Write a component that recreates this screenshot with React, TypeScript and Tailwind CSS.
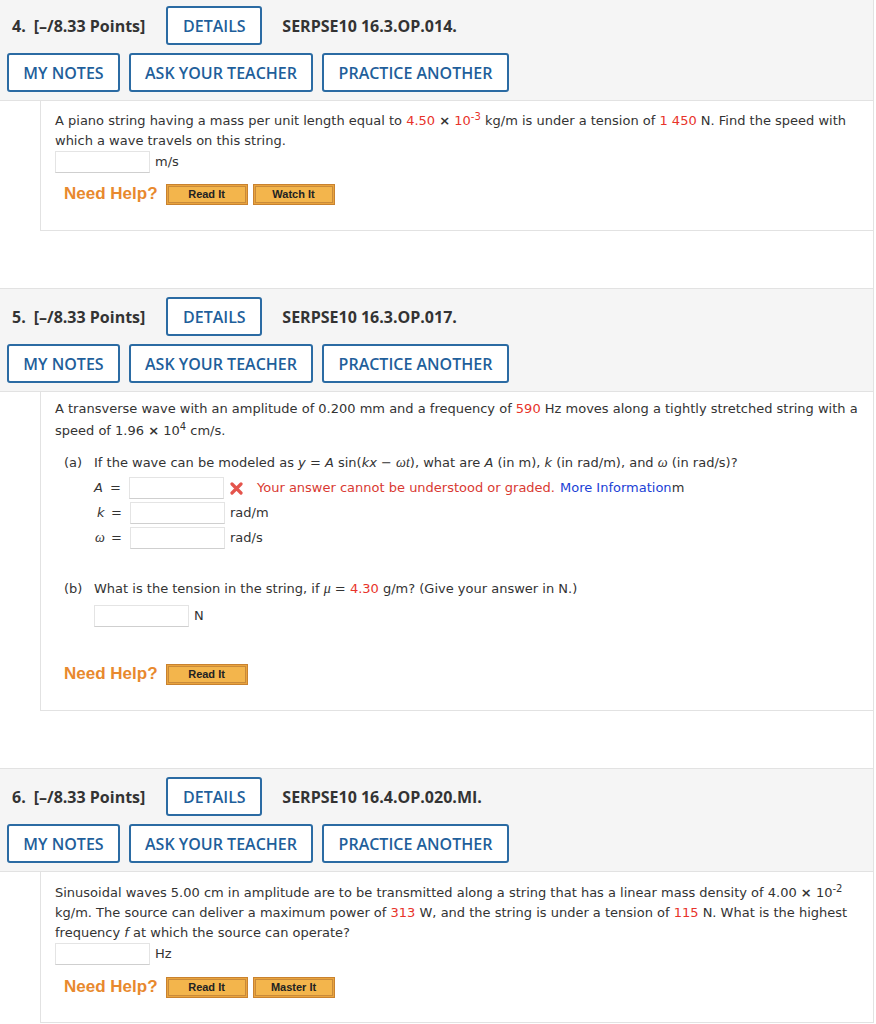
import React from 'react';

const body = "font-['DejaVu_Sans',Verdana,sans-serif] text-[13px] leading-[20px] text-[#333]";
const red = 'text-[#e8332a]';
const navBtn =
  'h-[39px] border-2 border-[#2b6ba3] rounded-[3px] text-[16px] font-semibold text-[#1f5f9b] bg-white';

const Header: React.FC<{ num: number; code: string; top?: boolean }> = ({ num, code, top }) => {
  return (
    <div
      className={`bg-[#f5f5f5] border-b border-[#e2e2e2] px-[7px] pb-[8px] font-['Open_Sans',sans-serif] ${
        top ? 'pt-[9px] -mt-[3px]' : 'pt-[8px] border-t'
      }`}
    >
      <div className="flex items-center h-[39px]">
        <span className="ml-[5px] text-[16px] font-bold text-[#333]">{num}.</span>
        <span className="ml-[8px] text-[16px] font-bold text-[#333]">[–/8.33 Points]</span>
        <button className={`${navBtn} ml-[21px] w-[96px]`}>DETAILS</button>
        <span className="ml-[20px] text-[16px] font-bold text-[#333]">{code}</span>
      </div>
      <div className="flex gap-[9px] mt-[8px]">
        <button className={`${navBtn} w-[113px]`}>MY NOTES</button>
        <button className={`${navBtn} w-[184px]`}>ASK YOUR TEACHER</button>
        <button className={`${navBtn} w-[187px]`}>PRACTICE ANOTHER</button>
      </div>
    </div>
  );
};

const Input: React.FC<{ className?: string }> = ({ className }) => (
  <div className={`h-[22px] w-[95px] border border-[#e4e4e4] border-b-[#cfcfcf] bg-white ${className ?? ''}`} />
);

const HelpBtn: React.FC<{ label: string }> = ({ label }) => (
  <div className="h-[21px] w-[82px] border border-[#c9822f] bg-[#f3b54c] shadow-[inset_0_0_0_1px_#e9a43e,inset_0_0_0_2px_#c98a3a] flex items-center justify-center font-['Liberation_Sans',Arial,sans-serif] text-[11px] font-bold text-[#222]">
    {label}
  </div>
);

const NeedHelp: React.FC<{ buttons: string[]; className?: string }> = ({ buttons, className }) => (
  <div className={`flex items-center h-[24px] ml-[9px] ${className ?? ''}`}>
    <span className="font-['Liberation_Sans',Arial,sans-serif] text-[17px] font-bold text-[#e8892e] mr-[8px]">
      Need Help?
    </span>
    <div className="flex gap-[5px]">
      {buttons.map((b) => (
        <HelpBtn key={b} label={b} />
      ))}
    </div>
  </div>
);

const Panel: React.FC<{ children: React.ReactNode; className?: string }> = ({ children, className }) => (
  <div className={`ml-[40px] border-l border-b border-[#e2e2e2] pl-[14px] pr-[10px] ${body} ${className ?? ''}`}>
    {children}
  </div>
);

const Sup: React.FC<{ children: React.ReactNode }> = ({ children }) => (
  <span className="text-[10px] leading-none align-super">{children}</span>
);

const Times = () => <span className="font-bold text-[#333]">×</span>;

const RedX = () => (
  <svg width="13" height="13" viewBox="0 0 13 13" className="mr-[14px]">
    <path d="M2 2 L11 11 M11 2 L2 11" stroke="#e4544c" strokeWidth="3.2" strokeLinecap="round" />
  </svg>
);

const Ser: React.FC<{ children: React.ReactNode }> = ({ children }) => (
  <span className="font-['Liberation_Serif',serif] italic text-[14px]">{children}</span>
);

export default function App() {
  return (
    <div className="w-[874px] border-r border-[#e2e2e2] bg-white">
      {/* Question 4 */}
      <Header num={4} code="SERPSE10 16.3.OP.014." top />
      <Panel className="pt-[10px] pb-[24px]">
        <p>
          A piano string having a mass per unit length equal to <span className={red}>4.50</span> <Times />{' '}
          <span className={red}>
            10<Sup>-3</Sup>
          </span>{' '}
          kg/m is under a tension of <span className={red}>1 450</span> N. Find the speed with which a wave travels on
          this string.
        </p>
        <div className="flex items-center">
          <Input />
          <span className="ml-[5px]">m/s</span>
        </div>
        <NeedHelp buttons={['Read It', 'Watch It']} className="mt-[9px]" />
      </Panel>

      <div className="h-[57px]" />

      {/* Question 5 */}
      <Header num={5} code="SERPSE10 16.3.OP.017." />
      <Panel className="pt-[6px] pb-[24px]">
        <p className="leading-[22px]">
          A transverse wave with an amplitude of 0.200 mm and a frequency of <span className={red}>590</span> Hz moves
          along a tightly stretched string with a speed of 1.96 <Times /> 10<Sup>4</Sup> cm/s.
        </p>
        <div className="mt-[11px] ml-[9px] flex">
          <span className="w-[30px]">(a)</span>
          <div className="flex-1">
            <p>
              If the wave can be modeled as <i>y</i> = <i>A</i> sin(<i>kx</i> − <Ser>ωt</Ser>), what are <i>A</i> (in
              m), <i>k</i> (in rad/m), and <Ser>ω</Ser> (in rad/s)?
            </p>
            <div className="mt-[4px] flex flex-col gap-[3px]">
              <div className="flex items-center h-[22px]">
                <span className="w-[35px] flex justify-between pr-[8px]">
                  <i>A</i>
                  <span>=</span>
                </span>
                <Input />
                <span className="ml-[6px] flex items-center">
                  <RedX />
                  <span className="text-[#d93a32]">Your answer cannot be understood or graded.</span>
                  <span className="ml-[5px] text-[#1a3fd6]">More Information</span>
                  <span>m</span>
                </span>
              </div>
              <div className="flex items-center h-[22px]">
                <span className="w-[36px] flex justify-between pl-[3px] pr-[8px]">
                  <i>k</i>
                  <span>=</span>
                </span>
                <Input />
                <span className="ml-[5px]">rad/m</span>
              </div>
              <div className="flex items-center h-[22px]">
                <span className="w-[36px] flex justify-between pl-[1px] pr-[8px]">
                  <Ser>ω</Ser>
                  <span>=</span>
                </span>
                <Input />
                <span className="ml-[5px]">rad/s</span>
              </div>
            </div>
          </div>
        </div>
        <div className="mt-[30px] ml-[9px] flex">
          <span className="w-[30px]">(b)</span>
          <div className="flex-1">
            <p>
              What is the tension in the string, if <Ser>μ</Ser> = <span className={red}>4.30</span> g/m? (Give your
              answer in N.)
            </p>
            <div className="mt-[6px] flex items-center">
              <Input />
              <span className="ml-[5px]">N</span>
            </div>
          </div>
        </div>
        <NeedHelp buttons={['Read It']} className="mt-[35px]" />
      </Panel>

      <div className="h-[57px]" />

      {/* Question 6 */}
      <Header num={6} code="SERPSE10 16.4.OP.020.MI." />
      <Panel className="pt-[11px] pb-[23px]">
        <p>
          Sinusoidal waves 5.00 cm in amplitude are to be transmitted along a string that has a linear mass density of
          4.00 <Times /> 10<Sup>-2</Sup> kg/m. The source can deliver a maximum power of{' '}
          <span className={red}>313</span> W, and the string is under a tension of <span className={red}>115</span> N.
          What is the highest frequency <i>f</i> at which the source can operate?
        </p>
        <div className="flex items-center">
          <Input />
          <span className="ml-[5px]">Hz</span>
        </div>
        <NeedHelp buttons={['Read It', 'Master It']} className="mt-[10px]" />
      </Panel>
    </div>
  );
}
